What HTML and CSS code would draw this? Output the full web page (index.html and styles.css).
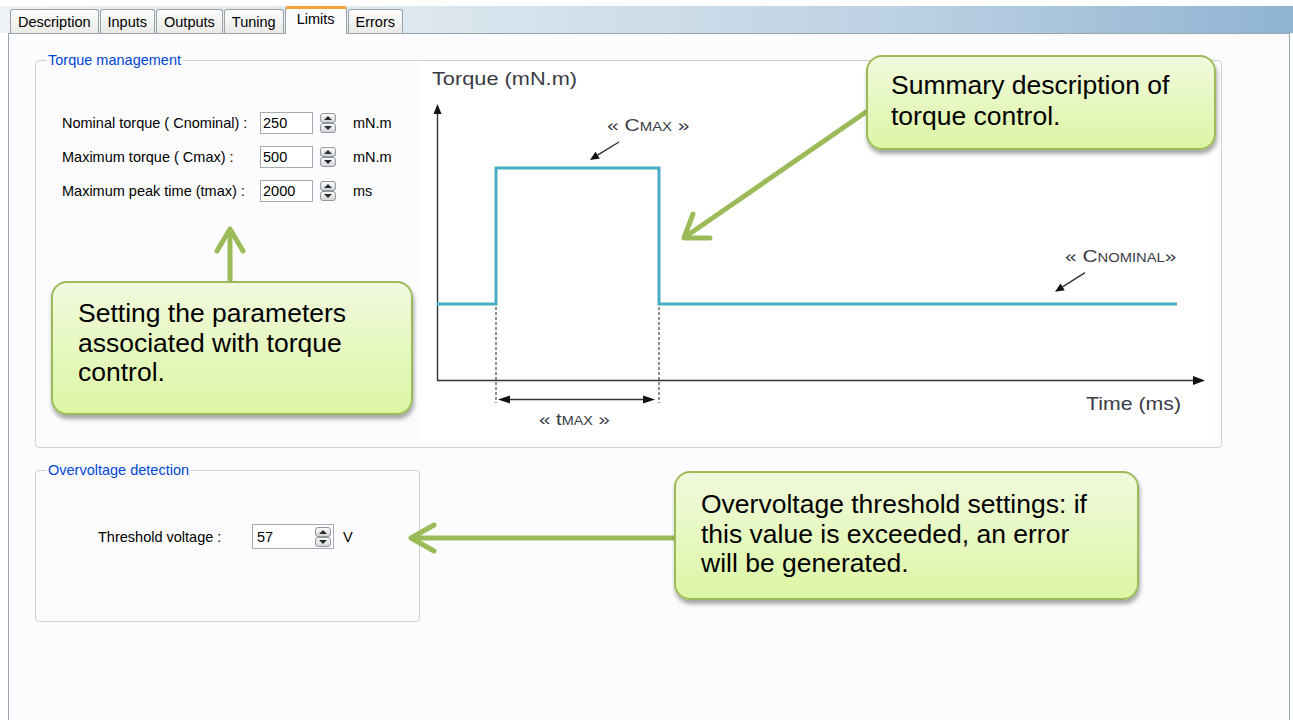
FILE: index.html
```html
<!DOCTYPE html>
<html lang="en">
<head>
  <meta charset="UTF-8">
  <meta name="viewport" content="width=device-width, initial-scale=1.0">
  <title>Limits</title>
  <link rel="stylesheet" href="styles.css">
</head>
<body>
  <div class="window">
    <!-- Tab strip -->
    <div class="tabs">
      <div class="tab">Description</div>
      <div class="tab">Inputs</div>
      <div class="tab">Outputs</div>
      <div class="tab">Tuning</div>
      <div class="tab active">Limits</div>
      <div class="tab">Errors</div>
    </div>

    <div class="panel">
      <!-- Torque management -->
      <div class="group group-torque">
        <span class="group-title">Torque management</span>
        <div class="params">
          <div class="row">
            <label>Nominal torque ( Cnominal) :</label>
            <span class="field">250</span>
            <span class="spin"><i class="up"></i><i class="down"></i></span>
            <span class="unit">mN.m</span>
          </div>
          <div class="row">
            <label>Maximum torque ( Cmax) :</label>
            <span class="field">500</span>
            <span class="spin"><i class="up"></i><i class="down"></i></span>
            <span class="unit">mN.m</span>
          </div>
          <div class="row">
            <label>Maximum peak time (tmax) :</label>
            <span class="field">2000</span>
            <span class="spin"><i class="up"></i><i class="down"></i></span>
            <span class="unit">ms</span>
          </div>
        </div>

        <svg class="chart" width="795" height="378" viewBox="0 0 795 378">
          <text class="axis-label" x="12" y="23" textLength="145" lengthAdjust="spacingAndGlyphs">Torque (mN.m)</text>
          <g class="axis">
            <line x1="17.5" y1="50" x2="17.5" y2="319"/>
            <polygon points="17.5,42 13.5,52 21.5,52"/>
            <line x1="17" y1="318.5" x2="775" y2="318.5"/>
            <polygon points="785,318.5 773,314 773,323"/>
          </g>
          <path class="signal" d="M17 242 H76 V106 H239 V242 H757"/>
          <g class="axis dashed">
            <line x1="76" y1="245" x2="76" y2="341"/>
            <line x1="239" y1="245" x2="239" y2="341"/>
          </g>
          <g class="axis">
            <line x1="86" y1="337.5" x2="226" y2="337.5"/>
            <polygon points="78,337.5 90,333.5 90,341.5"/>
            <polygon points="235,337.5 223,333.5 223,341.5"/>
            <line x1="199" y1="80" x2="177.6" y2="93.2"/>
            <polygon points="170,98 179.8,96.6 175.5,89.8"/>
            <line x1="665" y1="210.7" x2="642.6" y2="224.9"/>
            <polygon points="635,229.7 644.7,228.3 640.5,221.5"/>
          </g>
          <text transform="translate(187 69) scale(1.24 1)">« C<tspan class="sc">MAX</tspan> »</text>
          <text transform="translate(119 363) scale(1.2 1)">« t<tspan class="sc">MAX</tspan> »</text>
          <text transform="translate(645 200) scale(1.23 1)">« C<tspan class="sc">NOMINAL</tspan>»</text>
          <text class="axis-label" x="666" y="348" textLength="95" lengthAdjust="spacingAndGlyphs">Time (ms)</text>
        </svg>
      </div>

      <!-- Overvoltage detection -->
      <div class="group group-volt">
        <span class="group-title">Overvoltage detection</span>
        <div class="row row-volt">
          <label>Threshold voltage :</label>
          <span class="field field-wide">57<span class="spin"><i class="up"></i><i class="down"></i></span></span>
          <span class="unit unit-volt">V</span>
        </div>
      </div>
    </div>

    <!-- Annotation arrows and callouts -->
    <svg class="pointers" width="1293" height="720" viewBox="0 0 1293 720">
      <g>
        <line x1="230" y1="281" x2="230" y2="231"/>
        <polyline points="217,251 230,229 243,251"/>
        <line x1="866" y1="112" x2="685" y2="237"/>
        <polyline points="693,214 684,238 710,238"/>
        <line x1="674" y1="538" x2="413" y2="538"/>
        <polyline points="434,525 411,538 434,551"/>
      </g>
    </svg>

    <div class="callout callout-chart">Summary description of<br>torque control.</div>
    <div class="callout callout-params">Setting the parameters<br>associated with torque<br>control.</div>
    <div class="callout callout-volt">Overvoltage threshold settings: if<br>this value is exceeded, an error<br>will be generated.</div>
  </div>
</body>
</html>
```

FILE: styles.css
```css
/* General */
body {
  margin: 0;
  background: #fff;
  font-family: "Liberation Sans", Arial, sans-serif;
  font-size: 14.5px;
  color: #000;
}

.window {
  position: relative;
  width: 1293px;
  height: 720px;
  overflow: hidden;
}

/* Tabs */
.tabs {
  display: flex;
  align-items: flex-end;
  height: 27px;
  margin-top: 6px;
  padding-left: 10px;
  background: linear-gradient(to right, #eef2f6 0%, #dbe6ee 35%, #bcd1e3 70%, #8fb3d3 100%);
}

.tab {
  height: 24px;
  box-sizing: border-box;
  padding: 4px 7px 0;
  margin-right: 1px;
  line-height: 17px;
  border: 1px solid #9aa3a8;
  border-bottom: none;
  border-radius: 3px 3px 0 0;
  background: linear-gradient(#fdfdfd, #e9e9e6);
}

.tab.active {
  position: relative;
  z-index: 1;
  height: 28px;
  margin-bottom: -1px;
  padding: 2px 11px 0;
  border-top: 3px solid #f2a33a;
  background: #fcfcfe;
}

/* Page panel */
.panel {
  box-sizing: border-box;
  width: 1282px;
  height: 687px;
  margin-left: 8px;
  padding: 26px 0 0 26px;
  border: 1px solid #9aa6ae;
  border-bottom: none;
  background: #fcfcfe;
}

/* Group boxes */
.group {
  position: relative;
  box-sizing: border-box;
  border: 1px solid #d2d0d4;
  border-radius: 4px;
}

.group-title {
  position: absolute;
  top: -9px;
  left: 10px;
  padding: 0 2px;
  line-height: 17px;
  color: #0046d5;
  background: #fcfcfe;
}

.group-torque {
  display: flex;
  width: 1187px;
  height: 388px;
}

.group-volt {
  width: 385px;
  height: 152px;
  margin-top: 22px;
  padding: 53px 0 0 62px;
}

/* Parameter rows */
.params {
  box-sizing: border-box;
  width: 384px;
  padding: 51px 0 0 26px;
  display: flex;
  flex-direction: column;
  gap: 12px;
}

.row {
  display: flex;
  align-items: center;
  height: 22px;
}

.row label {
  flex-shrink: 0;
  width: 198px;
}

.field {
  box-sizing: border-box;
  width: 53px;
  height: 22px;
  padding-left: 2px;
  line-height: 20px;
  border: 1px solid #a4abb3;
  background: #fff;
}

.unit {
  margin-left: 17px;
}

.row-volt {
  height: 25px;
}

.row-volt label {
  width: 154px;
}

.field-wide {
  display: flex;
  align-items: center;
  justify-content: space-between;
  width: 82px;
  height: 25px;
  padding: 0 2px 0 4px;
}

.unit-volt {
  margin-left: 9px;
}

/* Spinner buttons */
.spin {
  display: flex;
  flex-direction: column;
  width: 16px;
  margin-left: 7px;
}

.field-wide .spin {
  margin-left: 0;
}

.spin i {
  position: relative;
  box-sizing: border-box;
  height: 10px;
  border: 1px solid #8f979f;
  border-radius: 3px;
  background: linear-gradient(#fbfbfb, #d3d5d8);
}

.spin i::after {
  content: "";
  position: absolute;
  left: 50%;
  top: 50%;
  margin: -2px 0 0 -4px;
  border-left: 4px solid transparent;
  border-right: 4px solid transparent;
}

.spin .up::after {
  border-bottom: 4px solid #2b2b2b;
}

.spin .down::after {
  border-top: 4px solid #2b2b2b;
}

/* Torque chart */
.chart {
  display: block;
  margin-top: 1px;
  background: #fff;
}

.chart text {
  font-family: "Liberation Sans", Arial, sans-serif;
  font-size: 17px;
  fill: #3a3a46;
}

.chart .axis-label {
  font-size: 18.5px;
}

.chart .sc {
  font-size: 12px;
}

.axis line {
  stroke: #333;
  stroke-width: 1.4;
}

.axis polygon {
  fill: #111;
}

.dashed line {
  stroke: #555;
  stroke-width: 1.3;
  stroke-dasharray: 3 2;
}

.signal {
  fill: none;
  stroke: #4bacc6;
  stroke-width: 3;
}

/* Annotations */
.pointers {
  position: absolute;
  left: 0;
  top: 0;
}

.pointers g {
  fill: none;
  stroke: #9bbb59;
  stroke-width: 5;
  stroke-linecap: round;
  stroke-linejoin: round;
}

.callout {
  position: absolute;
  box-sizing: border-box;
  border: 2px solid #9bbb59;
  border-radius: 16px;
  background: linear-gradient(#f1f9dd, #dcf6a4);
  box-shadow: 1px 4px 4px rgba(0, 0, 0, 0.35);
  font-size: 26.5px;
  line-height: 29.5px;
  white-space: nowrap;
}

.callout-chart {
  left: 866px;
  top: 55px;
  width: 350px;
  height: 95px;
  padding: 13px 0 0 23px;
  line-height: 31px;
}

.callout-params {
  left: 51px;
  top: 281px;
  width: 362px;
  height: 134px;
  padding: 16px 0 0 25px;
}

.callout-volt {
  left: 674px;
  top: 471px;
  width: 465px;
  height: 129px;
  padding: 17px 0 0 25px;
}
```
